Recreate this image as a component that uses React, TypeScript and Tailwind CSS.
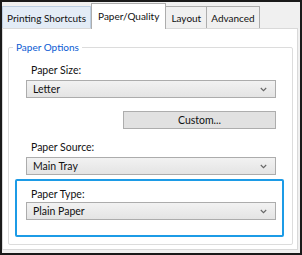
import React from 'react'

const font = { fontFamily: 'Lato, "Open Sans", sans-serif' }

function Chevron() {
  return (
    <svg width="7" height="5" viewBox="0 0 7 5" className="shrink-0">
      <path d="M0.8 1 L3.5 3.7 L6.2 1" fill="none" stroke="#666" strokeWidth="1.1" />
    </svg>
  )
}

function Select({ value }: { value: string }) {
  return (
    <div className="flex h-[18px] items-center justify-between border border-[#acacac] bg-gradient-to-b from-[#f2f2f2] to-[#e4e4e4] pl-[6px] pr-[8px] text-[10.5px] leading-none text-[#111]">
      <span>{value}</span>
      <Chevron />
    </div>
  )
}

function Label({ children }: { children: React.ReactNode }) {
  return <div className="h-[14px] pl-[5px] text-[10.5px] leading-[14px] text-[#111]">{children}</div>
}

export default function App() {
  return (
    <div style={font} className="flex h-[255px] w-[302px] flex-col border-2 border-[#1a1a1a] bg-[#f0f0f0] text-[10.5px] leading-[14px]">
      {/* tabs */}
      <div className="flex h-[26px] items-end text-[10px]">
        <div className="flex h-[22px] items-center border border-b-0 border-[#bccee2] bg-[#e3ecf6] px-[4px] text-[#111]">Printing Shortcuts</div>
        <div className="relative z-10 -mb-px flex h-[26px] items-center border border-b-0 border-[#adadad] bg-white px-[6px] pb-[2px] text-[#111]">Paper/Quality</div>
        <div className="flex h-[22px] items-center border border-b-0 border-l-0 border-[#adadad] bg-[#f0f0f0] px-[5px] text-[#111]">Layout</div>
        <div className="flex h-[22px] items-center border border-b-0 border-l-0 border-[#adadad] bg-[#f0f0f0] px-[4px] text-[#111]">Advanced</div>
      </div>
      {/* panel */}
      <div className="mr-[2px] mb-[3px] flex-1 border border-[#d9d9d9] bg-white pt-[18px] pr-[4px] pb-[4px] pl-[5px]">
        <div className="h-full rounded-[2px] border border-[#dcdcdc] pr-[16px] pl-[17px]">
          <div className="-mt-[8px] -ml-[13px] flex h-[14px]">
            <span className="bg-white px-[3px] text-[10px] text-[#0a5bd3]">Paper Options</span>
          </div>
          <div className="mt-[9px] flex flex-col">
            <Label>Paper Size:</Label>
            <div className="mt-[3px]">
              <Select value="Letter" />
            </div>
            <div className="mt-[13px] flex justify-end">
              <button className="h-[18px] w-[153px] border border-[#adadad] bg-[#e1e1e1] text-[10.5px] leading-none text-[#111]">Custom...</button>
            </div>
            <div className="mt-[11px]">
              <Label>Paper Source:</Label>
            </div>
            <div className="mt-[3px]">
              <Select value="Main Tray" />
            </div>
            <div className="mt-[4px] -mr-[8px] -ml-[11px] rounded-[2px] border-2 border-[#1c9be6] pt-[6px] pr-[6px] pb-[15px] pl-[9px]">
              <Label>Paper Type:</Label>
              <div className="mt-[1px]">
                <Select value="Plain Paper" />
              </div>
            </div>
          </div>
        </div>
      </div>
    </div>
  )
}
